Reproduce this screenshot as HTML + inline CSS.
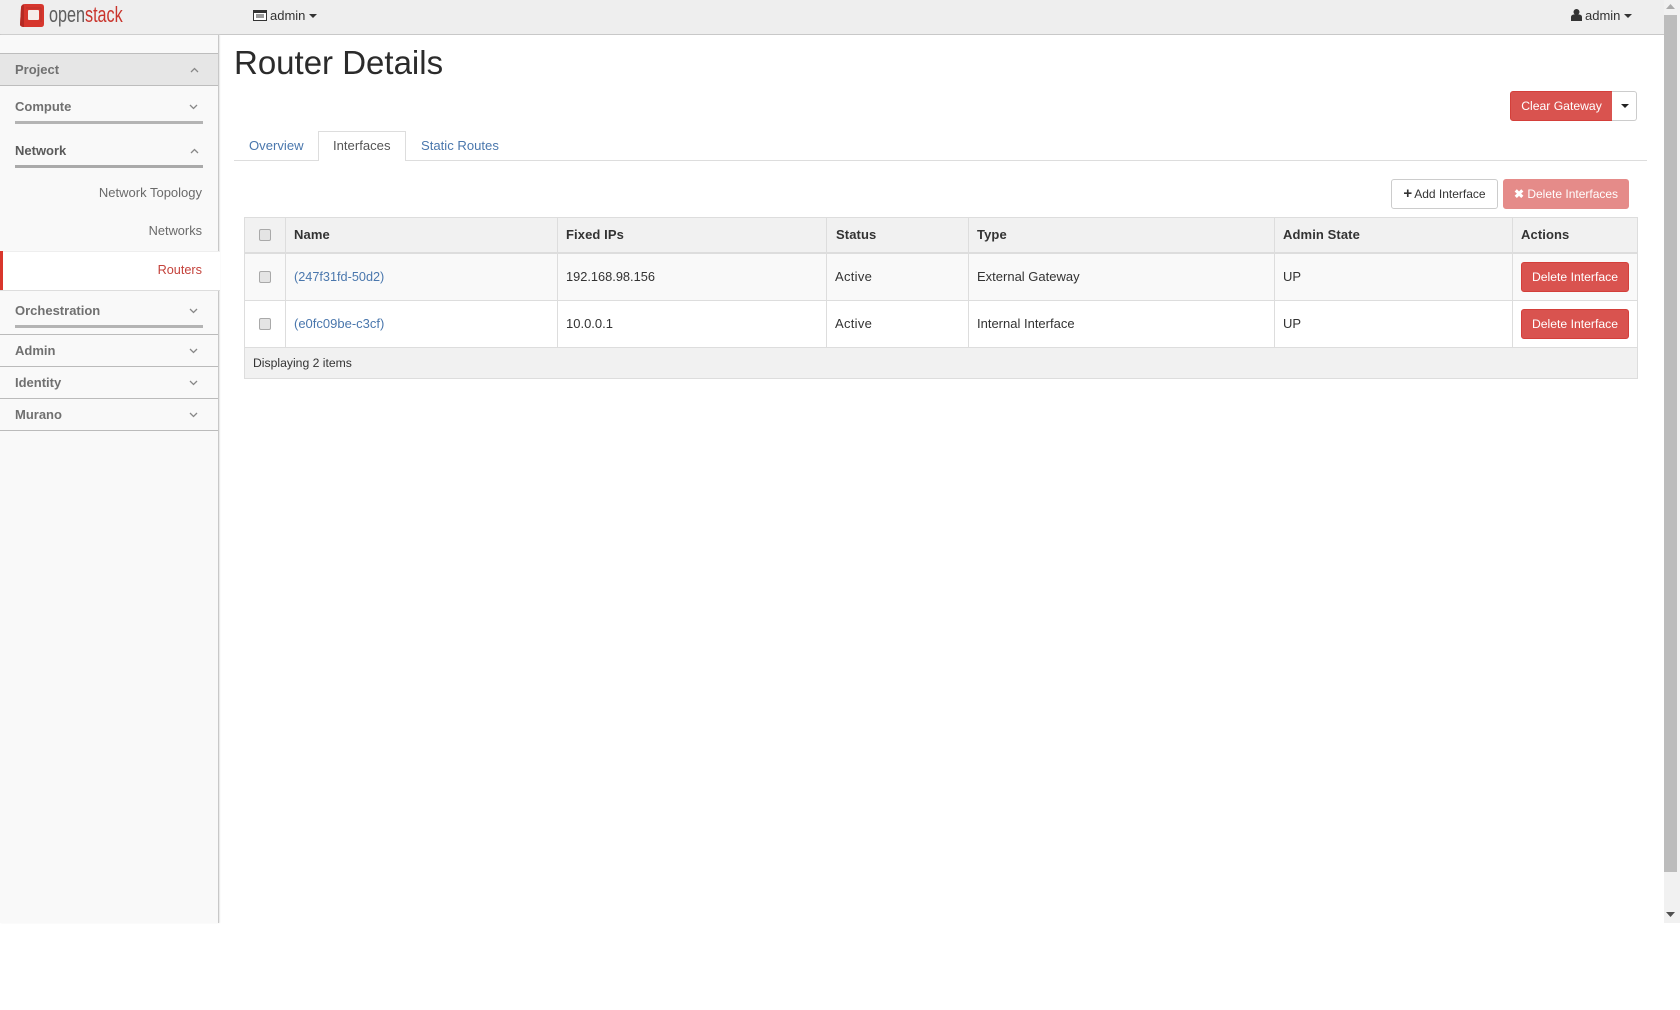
<!DOCTYPE html>
<html><head><meta charset="utf-8"><title>Router Details</title>
<style>
html,body{margin:0;padding:0;background:#fff;width:1680px;height:1010px;overflow:hidden;font-family:"Liberation Sans",Arial,sans-serif;font-size:13px;color:#333}
.a{position:absolute;white-space:nowrap}
.r{position:absolute;display:block}
.t{position:absolute;white-space:nowrap;height:20px;line-height:20px}
.h{font-weight:bold;font-size:13px;color:#333;letter-spacing:.1px}
.n{font-weight:bold;font-size:13px;color:#707070;left:15px}
.s{font-size:13px;color:#6a6a6a;right:1478px}
.l{color:#4a77ad;text-decoration:none}
.b{position:absolute;box-sizing:border-box;text-align:center;font-size:12.2px;border-radius:3px;height:30px;line-height:28px}
.red{background:#d9534f;border:1px solid #d43f3a;color:#fff}
.cb{position:absolute;left:259px;width:12px;height:12px;box-sizing:border-box;border:1px solid #a9a9a9;border-radius:2px;background:#e4e4e4}
svg{position:absolute;display:block}
</style></head><body>
<!-- page area -->
<div class="r" style="left:0;top:0;width:1680px;height:923px;background:#fff"></div>
<!-- navbar -->
<div class="r" style="left:0;top:0;width:1664px;height:34px;background:#eeeeee;border-bottom:1px solid #c8c8c8"></div>
<svg style="left:19px;top:3px" width="26" height="25" viewBox="0 0 26 25"><path d="M6 1H22Q25 1 25 4V21Q25 24 22 24H5Q2 24 1 22L2 5Q2 1 6 1Z" fill="#d6362d"/><path d="M1 22L2 5Q2 2 5 1.500L5 24Q2 24 1 22Z" fill="#b52a24"/><rect x="9" y="7" width="11" height="10" rx="1" fill="#f6ecea"/><path d="M7 5H22M22 5V19" stroke="#a8322c" stroke-width="1" fill="none" opacity=".6"/></svg>
<div class="t" style="left:49px;top:5px;font-size:22px;line-height:20px;transform:scaleX(.735);transform-origin:0 50%;color:#5d5d5d">open<span style="color:#c9342c">stack</span></div>
<svg style="left:253px;top:10px" width="14" height="11" viewBox="0 0 14 11"><rect x=".5" y=".5" width="13" height="10" fill="#fff" stroke="#333"/><rect x="1" y="1" width="12" height="2" fill="#333"/><path d="M3 5H11M3 7H11" stroke="#333"/></svg>
<div class="t" style="left:270px;top:6px;color:#333">admin</div>
<svg style="left:309px;top:14px" width="8" height="5"><path d="M0 0H8L4 4Z" fill="#333"/></svg>
<svg style="left:1571px;top:9px" width="11" height="12" viewBox="0 0 11 12"><circle cx="5.5" cy="3" r="3" fill="#333"/><path d="M0 12V8Q0 6 2.5 5.5H8.5Q11 6 11 8V12Z" fill="#333"/></svg>
<div class="t" style="left:1585px;top:6px;color:#333">admin</div>
<svg style="left:1624px;top:14px" width="8" height="5"><path d="M0 0H8L4 4Z" fill="#333"/></svg>

<!-- sidebar -->
<div class="r" style="left:0;top:35px;width:218px;height:888px;background:#f9f9f9;border-right:1px solid #c8c8c8;box-shadow:1px 0 1px #e8e8e8"></div>
<div class="r" style="left:0;top:53px;width:218px;height:31px;background:#e6e6e6;border-top:1px solid #bdbdbd;border-bottom:1px solid #bdbdbd"></div>
<div class="t n" style="top:60px">Project</div>
<svg style="left:190px;top:67px" width="9" height="6"><path d="M1 5L4.500 1.500L8 5" fill="none" stroke="#888" stroke-width="1.300"/></svg>
<div class="t n" style="top:97px">Compute</div>
<svg style="left:189px;top:104px" width="9" height="6"><path d="M1 1L4.500 4.500L8 1" fill="none" stroke="#888" stroke-width="1.300"/></svg>
<div class="r" style="left:15px;top:121px;width:188px;height:3px;background:#b4b4b4"></div>
<div class="t n" style="top:141px;color:#5a5a5a">Network</div>
<svg style="left:190px;top:148px" width="9" height="6"><path d="M1 5L4.500 1.500L8 5" fill="none" stroke="#888" stroke-width="1.300"/></svg>
<div class="r" style="left:15px;top:165px;width:188px;height:3px;background:#aaa"></div>
<div class="t s" style="top:183px">Network Topology</div>
<div class="t s" style="top:221px;font-size:12.8px">Networks</div>
<div class="r" style="left:0;top:251px;width:220px;height:38px;background:#fff;border-top:1px solid #eee;border-bottom:1px solid #ddd"></div>
<div class="r" style="left:0;top:251px;width:3px;height:39px;background:#d9362c"></div>
<div class="t s" style="top:260px;color:#c4423b;font-size:12.7px">Routers</div>
<div class="t n" style="top:301px">Orchestration</div>
<svg style="left:189px;top:308px" width="9" height="6"><path d="M1 1L4.500 4.500L8 1" fill="none" stroke="#888" stroke-width="1.300"/></svg>
<div class="r" style="left:15px;top:325px;width:188px;height:3px;background:#b4b4b4"></div>
<div class="r" style="left:0;top:334px;width:218px;height:1px;background:#bbb"></div>
<div class="t n" style="top:341px">Admin</div>
<svg style="left:189px;top:348px" width="9" height="6"><path d="M1 1L4.500 4.500L8 1" fill="none" stroke="#888" stroke-width="1.300"/></svg>
<div class="r" style="left:0;top:366px;width:218px;height:1px;background:#bbb"></div>
<div class="t n" style="top:373px">Identity</div>
<svg style="left:189px;top:380px" width="9" height="6"><path d="M1 1L4.500 4.500L8 1" fill="none" stroke="#888" stroke-width="1.300"/></svg>
<div class="r" style="left:0;top:398px;width:218px;height:1px;background:#bbb"></div>
<div class="t n" style="top:405px">Murano</div>
<svg style="left:189px;top:412px" width="9" height="6"><path d="M1 1L4.500 4.500L8 1" fill="none" stroke="#888" stroke-width="1.300"/></svg>
<div class="r" style="left:0;top:430px;width:218px;height:1px;background:#bbb"></div>

<!-- title -->
<div class="a" style="left:234px;top:43px;font-size:33px;line-height:40px;color:#2b2b2b">Router Details</div>

<!-- top action -->
<div class="b red" style="left:1510px;top:91px;width:103px;border-radius:3px 0 0 3px;font-size:12.2px">Clear Gateway</div>
<div class="b" style="left:1612px;top:91px;width:25px;border:1px solid #ccc;border-left:0;border-radius:0 3px 3px 0;background:#fff"></div>
<svg style="left:1621px;top:104px" width="8" height="5"><path d="M0 0H8L4 4Z" fill="#222"/></svg>

<!-- tabs -->
<div class="r" style="left:234px;top:160px;width:1413px;height:1px;background:#ddd"></div>
<div class="r" style="left:318px;top:131px;width:88px;height:30px;box-sizing:border-box;background:#fff;border:1px solid #ddd;border-bottom:0"></div>
<div class="t l" style="left:249px;top:136px;font-size:13.1px">Overview</div>
<div class="t" style="left:333px;top:136px;font-size:13.1px;color:#555">Interfaces</div>
<div class="t l" style="left:421px;top:136px;font-size:13.1px">Static Routes</div>

<!-- table actions -->
<div class="b" style="left:1391px;top:179px;width:107px;background:#fff;border:1px solid #ccc;color:#333;font-size:12px"><span style="font-weight:bold;font-size:15px;line-height:15px;margin-right:2px">+</span>Add Interface</div>
<div class="b" style="left:1503px;top:179px;width:126px;background:#e58b89;border:1px solid #e58b89;color:#fff;font-size:12px"><span style="font-weight:bold">&#10006;</span> Delete Interfaces</div>

<!-- table -->
<div class="r" style="left:244px;top:217px;width:1394px;height:162px;box-sizing:border-box;border:1px solid #ddd;background:#fff"></div>
<div class="r" style="left:245px;top:218px;width:1392px;height:34px;background:#f1f1f1"></div>
<div class="r" style="left:245px;top:252px;width:1392px;height:2px;background:#ddd"></div>
<div class="r" style="left:245px;top:254px;width:1392px;height:46px;background:#f9f9f9"></div>
<div class="r" style="left:245px;top:300px;width:1392px;height:1px;background:#ddd"></div>
<div class="r" style="left:245px;top:347px;width:1392px;height:31px;background:#f1f1f1;border-top:1px solid #ddd;box-sizing:border-box"></div>
<div class="r" style="left:285px;top:218px;width:1px;height:129px;background:#ddd"></div>
<div class="r" style="left:557px;top:218px;width:1px;height:129px;background:#ddd"></div>
<div class="r" style="left:826px;top:218px;width:1px;height:129px;background:#ddd"></div>
<div class="r" style="left:968px;top:218px;width:1px;height:129px;background:#ddd"></div>
<div class="r" style="left:1274px;top:218px;width:1px;height:129px;background:#ddd"></div>
<div class="r" style="left:1512px;top:218px;width:1px;height:129px;background:#ddd"></div>

<div class="cb" style="top:229px"></div>
<div class="cb" style="top:271px"></div>
<div class="cb" style="top:318px"></div>

<div class="t h" style="left:294px;top:225px">Name</div>
<div class="t h" style="left:566px;top:225px">Fixed IPs</div>
<div class="t h" style="left:836px;top:225px">Status</div>
<div class="t h" style="left:977px;top:225px">Type</div>
<div class="t h" style="left:1283px;top:225px">Admin State</div>
<div class="t h" style="left:1521px;top:225px">Actions</div>

<div class="t l" style="left:294px;top:267px;font-size:12.7px">(247f31fd-50d2)</div>
<div class="t" style="left:566px;top:267px;font-size:12.8px">192.168.98.156</div>
<div class="t" style="left:835px;top:267px;letter-spacing:.3px">Active</div>
<div class="t" style="left:977px;top:267px">External Gateway</div>
<div class="t" style="left:1283px;top:267px">UP</div>
<div class="b red" style="left:1521px;top:262px;width:108px">Delete Interface</div>

<div class="t l" style="left:294px;top:314px">(e0fc09be-c3cf)</div>
<div class="t" style="left:566px;top:314px">10.0.0.1</div>
<div class="t" style="left:835px;top:314px;letter-spacing:.3px">Active</div>
<div class="t" style="left:977px;top:314px">Internal Interface</div>
<div class="t" style="left:1283px;top:314px">UP</div>
<div class="b red" style="left:1521px;top:309px;width:108px">Delete Interface</div>

<div class="t" style="left:253px;top:353px;font-size:12.2px">Displaying 2 items</div>

<!-- scrollbar -->
<div class="r" style="left:1664px;top:0;width:16px;height:923px;background:#f1f1f1"></div>
<div class="r" style="left:1664px;top:15px;width:13px;height:857px;background:#bcbcbc"></div>
<svg style="left:1666px;top:4px" width="9" height="6"><path d="M0 5H9L4.500 0Z" fill="#aaa"/></svg>
<svg style="left:1666px;top:912px" width="9" height="6"><path d="M0 0H9L4.500 5Z" fill="#505050"/></svg>
</body></html>
